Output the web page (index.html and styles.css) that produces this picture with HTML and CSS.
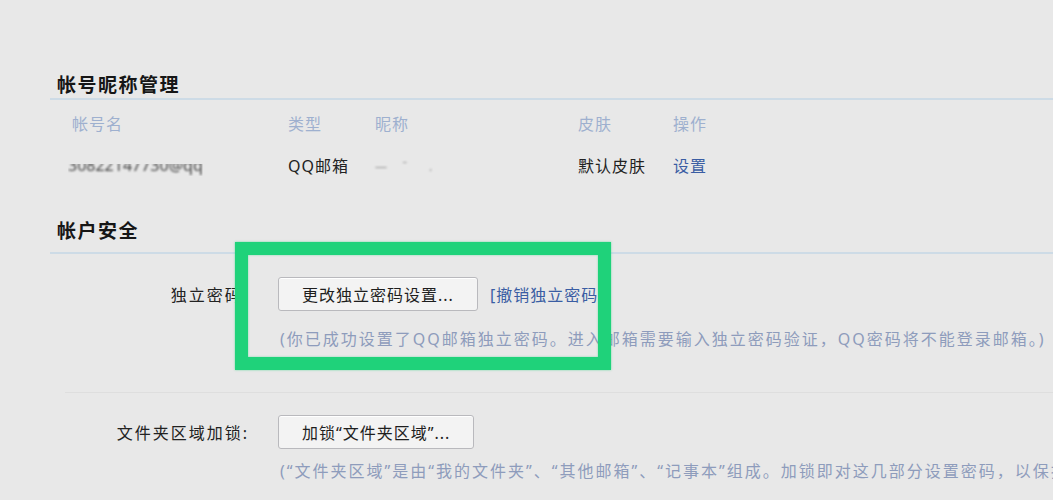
FILE: index.html
```html
<!DOCTYPE html>
<html lang="zh-CN">
<head>
<meta charset="utf-8">
<title>帐户设置</title>
<link rel="stylesheet" href="styles.css">
</head>
<body>
<div class="page">
  <section class="sec sec-nick">
    <h2 class="sec-title t1">帐号昵称管理</h2>
    <div class="trow thead">
      <span class="c1">帐号名</span>
      <span class="c2">类型</span>
      <span class="c3">昵称</span>
      <span class="c4">皮肤</span>
      <span class="c5">操作</span>
    </div>
    <div class="trow tdata">
      <span class="c1"><span class="blurred">30822147730@qq</span></span>
      <span class="c2">QQ邮箱</span>
      <span class="c3"><span class="blurred faint">— &nbsp; &nbsp; ˉ &nbsp; &nbsp; &nbsp; .</span></span>
      <span class="c4">默认皮肤</span>
      <span class="c5 link">设置</span>
    </div>
  </section>

  <section class="sec sec-safe">
    <h2 class="sec-title t2">帐户安全</h2>
    <div class="frow r1">
      <div class="flabel">独立密码:</div>
      <div class="fbody">
        <div class="fline">
          <button class="btn">更改独立密码设置...</button>
          <a class="link cancel">[撤销独立密码]</a>
        </div>
      </div>
    </div>
    <p class="hint h1">(你已成功设置了QQ邮箱独立密码。进入邮箱需要输入独立密码验证，QQ密码将不能登录邮箱。)</p>
    <div class="sep"></div>
    <div class="frow r2">
      <div class="flabel">文件夹区域加锁:</div>
      <div class="fbody">
        <button class="btn">加锁“文件夹区域”...</button>
      </div>
    </div>
    <div class="hintwrap">
      <p class="hint h2">(“文件夹区域”是由“我的文件夹”、“其他邮箱”、“记事本”组成。加锁即对这几部分设置密码，以保护</p>
    </div>
    <div class="highlight"></div>
  </section>
</div>
</body>
</html>
```

FILE: styles.css
```css
html, body {
  margin: 0;
  padding: 0;
  background: #e8e8e8;
  overflow: hidden;
}
body {
  width: 1053px;
  height: 500px;
  font-family: "Noto Sans", "Noto Sans CJK SC", sans-serif;
  color: #222;
}
.page {
  position: relative;
  padding-top: 72px;
}
.sec-title {
  margin: 0 0 0 50px;
  padding-left: 7px;
  font-size: 19px;
  line-height: 26px;
  font-weight: 700;
  letter-spacing: 1.5px;
  color: #161616;
  border-bottom: 2px solid #cddbe6;
}
.t1 {
  padding-bottom: 0;
}
.t2 {
  margin-top: 32px;
  padding-bottom: 8px;
}
.trow {
  display: grid;
  grid-template-columns: 216px 87px 203px 95px 1fr;
  padding-left: 72px;
  height: 42px;
  align-items: center;
  font-size: 16px;
  letter-spacing: 1px;
}
.thead {
  margin-top: 2px;
  color: #9eb0cf;
}
.tdata {
  color: #222;
}
.tdata .c1 {
  margin-left: -4px;
}
.blurred {
  display: inline-block;
  color: #444;
  filter: blur(1.2px);
  clip-path: inset(45% 0 0 0);
  letter-spacing: 0;
}
.faint {
  color: #999;
  clip-path: none;
  font-size: 12px;
}
.link {
  color: #3a5da3;
  cursor: pointer;
}
.frow {
  display: grid;
  grid-template-columns: 250px 1fr;
  column-gap: 28px;
  align-items: center;
}
.r1 {
  margin-top: 23px;
}
.r2 {
  margin-top: 22px;
}
.flabel {
  text-align: right;
  font-size: 16px;
  letter-spacing: 2px;
  color: #222;
  padding-right: 1px;
}
.fline {
  display: flex;
  align-items: center;
  gap: 12px;
}
.btn {
  height: 34px;
  padding: 0 23px;
  font-family: inherit;
  font-size: 16px;
  letter-spacing: 1px;
  color: #1e1e1e;
  background: #f3f3f3;
  border: 1px solid #b9b9bd;
  border-radius: 3px;
  box-shadow: inset 0 1px 0 #fff;
}
.r2 .btn {
  padding: 0 23px;
}
.cancel {
  font-size: 16px;
  letter-spacing: 1px;
}
.hintwrap {
  width: 1053px;
  overflow: hidden;
}
.hint {
  margin: 0;
  padding-left: 280px;
  font-size: 16px;
  line-height: 20px;
  letter-spacing: 2px;
  color: #8e9cbc;
  white-space: nowrap;
}
.h1 {
  margin-top: 18px;
}
.h2 {
  margin-top: 12px;
}
.sep {
  margin: 43px 0 0 65px;
  height: 1px;
  background: #dedede;
}
.highlight {
  position: absolute;
  left: 235px;
  top: 242px;
  width: 350px;
  height: 102px;
  border: 13px solid #1fd27a;
  box-shadow: 0 0 2px rgba(31, 210, 122, 0.6), inset 0 0 2px rgba(31, 210, 122, 0.6);
}
```
